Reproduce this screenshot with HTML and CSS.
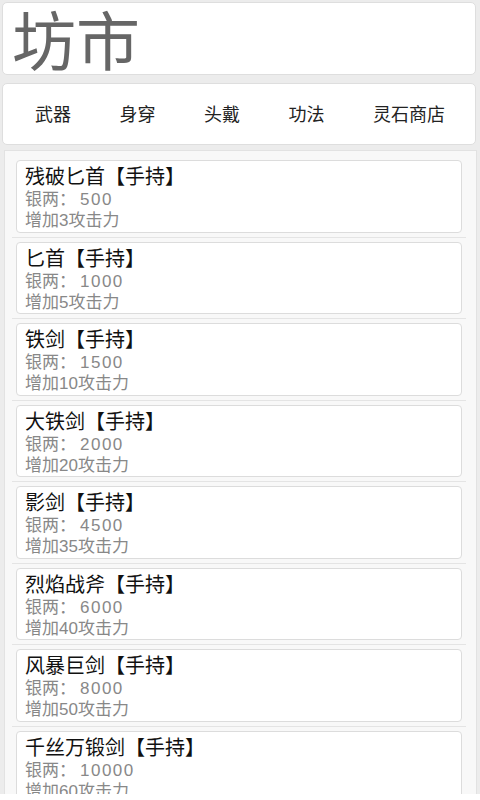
FILE: index.html
```html
<!DOCTYPE html>
<html lang="zh-CN">
<head>
  <meta charset="UTF-8" />
  <title>坊市</title>
  <link rel="stylesheet" href="styles.css">
</head>
<body>

<div class="page">
  <div class="title-box">
    <div class="title">坊市</div>
  </div>

  <div class="tabs">
    <div class="tab">武器</div>
    <div class="tab">身穿</div>
    <div class="tab">头戴</div>
    <div class="tab">功法</div>
    <div class="tab">灵石商店</div>
  </div>

  <div class="shop-list">
    <div class="row">
      <div class="card">
        <div class="name">残破匕首【手持】</div>
        <div class="info">银两：<span class="price">500</span></div>
        <div class="info">增加3攻击力</div>
      </div>
    </div>
    <div class="row">
      <div class="card">
        <div class="name">匕首【手持】</div>
        <div class="info">银两：<span class="price">1000</span></div>
        <div class="info">增加5攻击力</div>
      </div>
    </div>
    <div class="row">
      <div class="card">
        <div class="name">铁剑【手持】</div>
        <div class="info">银两：<span class="price">1500</span></div>
        <div class="info">增加10攻击力</div>
      </div>
    </div>
    <div class="row">
      <div class="card">
        <div class="name">大铁剑【手持】</div>
        <div class="info">银两：<span class="price">2000</span></div>
        <div class="info">增加20攻击力</div>
      </div>
    </div>
    <div class="row">
      <div class="card">
        <div class="name">影剑【手持】</div>
        <div class="info">银两：<span class="price">4500</span></div>
        <div class="info">增加35攻击力</div>
      </div>
    </div>
    <div class="row">
      <div class="card">
        <div class="name">烈焰战斧【手持】</div>
        <div class="info">银两：<span class="price">6000</span></div>
        <div class="info">增加40攻击力</div>
      </div>
    </div>
    <div class="row">
      <div class="card">
        <div class="name">风暴巨剑【手持】</div>
        <div class="info">银两：<span class="price">8000</span></div>
        <div class="info">增加50攻击力</div>
      </div>
    </div>
    <div class="row">
      <div class="card">
        <div class="name">千丝万锻剑【手持】</div>
        <div class="info">银两：<span class="price">10000</span></div>
        <div class="info">增加60攻击力</div>
      </div>
    </div>
  </div>
</div>

</body>
</html>
```

FILE: styles.css
```css
* { box-sizing: border-box; }
body, html {
  margin: 0;
  padding: 0;
  background-color: #fff;
  font-family: "Liberation Sans", "Noto Sans CJK SC", sans-serif;
  overflow: hidden;
}
.page {
  background-color: #ececec;
  height: 794px;
  padding-top: 2px;
  overflow: hidden;
}
.title-box {
  margin: 0 4px 0 2px;
  height: 73px;
  background: #fff;
  border: 1px solid #dedede;
  border-radius: 5px;
}
.title {
  font-size: 64px;
  line-height: 70px;
  color: #666;
  padding: 5px 0 0 9px;
}
.tabs {
  margin: 8px 4px 0 2px;
  height: 62px;
  background: #fff;
  border: 1px solid #dedede;
  border-radius: 5px;
  display: flex;
  align-items: center;
  justify-content: space-between;
  padding: 0 30px 3px 32px;
}
.tab {
  font-size: 18px;
  color: #222;
}
.shop-list {
  margin: 5px 3px 0 4px;
  height: 650px;
  background: #f8f8f8;
  border: 1px solid #e2e2e2;
  padding-top: 5px;
}
.row {
  margin: 0 10px 0 7px;
  padding: 4px 0;
  border-bottom: 1px solid #e4e4e4;
}
.card {
  margin: 0 4px;
  background: #fff;
  border: 1px solid #dcdcdc;
  border-radius: 4px;
  padding: 5px 8px 0.5px;
}
.name {
  font-size: 20px;
  line-height: 23px;
  color: #111;
}
.info {
  font-size: 17px;
  line-height: 21px;
  color: #888;
}
.price {
  margin-left: 4px;
  letter-spacing: 1.5px;
}
```
